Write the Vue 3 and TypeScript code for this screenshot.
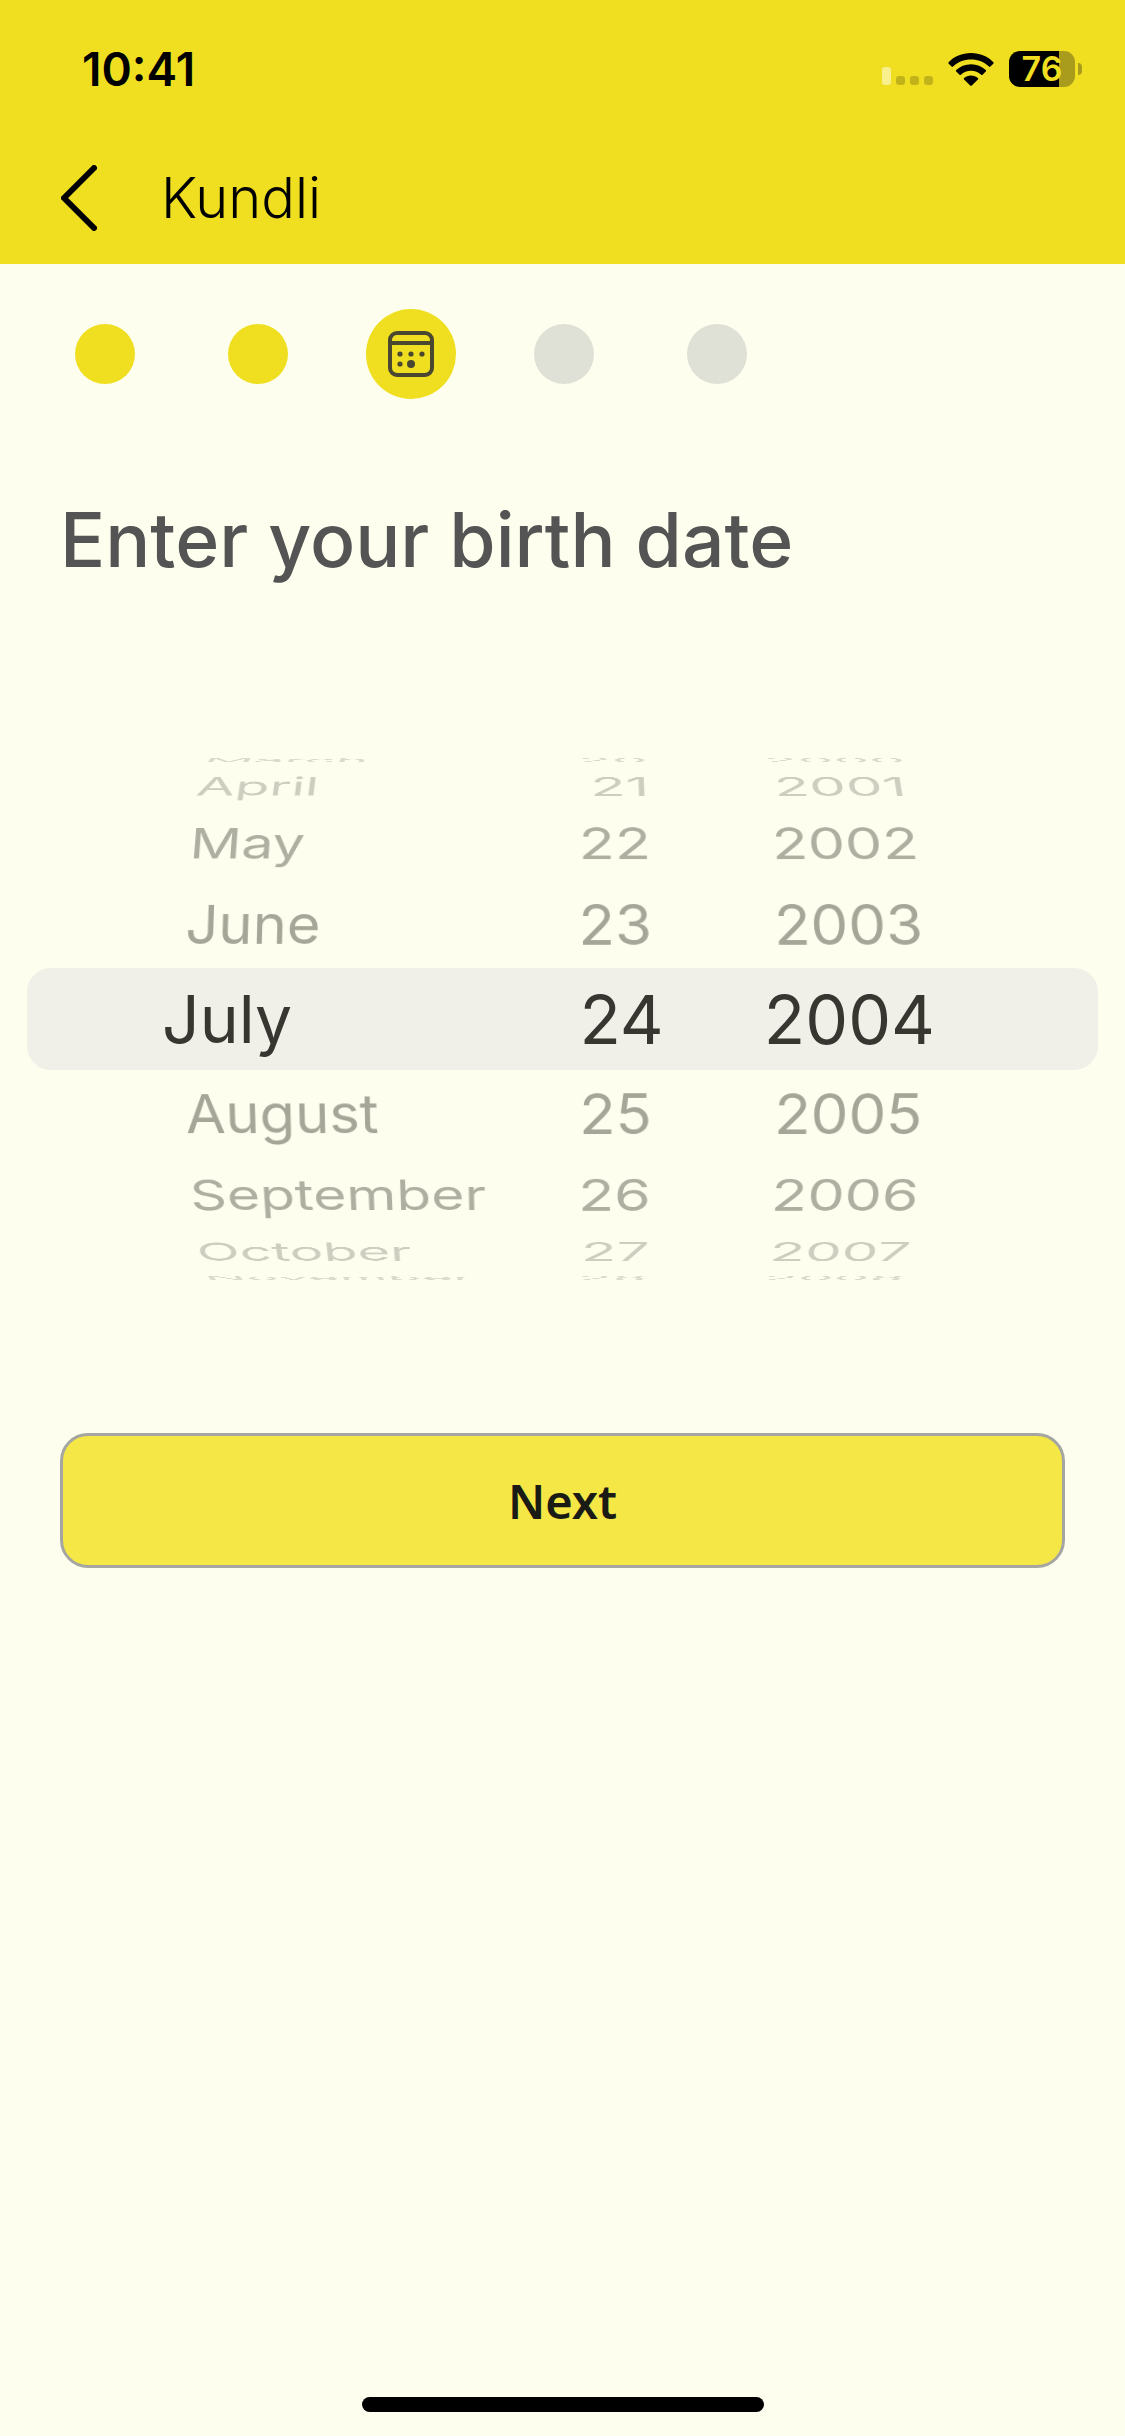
<script setup lang="ts">
import { reactive } from 'vue'

type WheelKey = 'month' | 'day' | 'year'

interface Wheel {
  key: WheelKey
  label: string
  values: string[]
  index: number
}

const months = [
  'January', 'February', 'March', 'April', 'May', 'June',
  'July', 'August', 'September', 'October', 'November', 'December',
]
const days = Array.from({ length: 31 }, (_, i) => String(i + 1))
const years = Array.from({ length: 100 }, (_, i) => String(1930 + i))

const wheels = reactive<Wheel[]>([
  { key: 'month', label: 'Month', values: months, index: 6 },
  { key: 'day', label: 'Day', values: days, index: 23 },
  { key: 'year', label: 'Year', values: years, index: 74 },
])

const steps = ['done', 'done', 'current', 'todo', 'todo'] as const

const REACH = 4

function slots(wheel: Wheel) {
  const result: { value: string; index: number; offset: number }[] = []
  for (let offset = -REACH; offset <= REACH; offset++) {
    const count = wheel.values.length
    const index = (wheel.index + offset + count) % count
    result.push({ value: wheel.values[index], index, offset })
  }
  return result
}
</script>

<template>
  <div class="screen">
    <header class="top">
      <div class="status">
        <span class="time">10:41</span>
        <div class="indicators">
          <svg class="signal" viewBox="0 0 51 18" aria-hidden="true">
            <rect x="0" y="0" width="9" height="18" rx="3" fill="#f8f08c" />
            <g fill="#c3b31a">
              <rect x="14" y="9" width="9" height="9" rx="3" />
              <rect x="28" y="9" width="9" height="9" rx="3" />
              <rect x="42" y="9" width="9" height="9" rx="3" />
            </g>
          </svg>
          <svg class="wifi" viewBox="0 0 46 33" aria-hidden="true">
            <path d="M23 0C14 0 6 3.500 0.600 9.200Q0 10 0.700 10.800L3.600 13.600Q4.300 14.200 5 13.500C9.800 9 16 6.500 23 6.500S36.200 9 41 13.500Q41.700 14.200 42.400 13.600L45.300 10.800Q46 10 45.400 9.200C40 3.500 32 0 23 0Z" />
            <path d="M23 11.200C17.200 11.200 12 13.400 8.200 17Q7.500 17.800 8.200 18.500L11.500 21.700Q12.200 22.300 12.900 21.700C15.600 19.200 19.100 17.700 23 17.700S30.400 19.200 33.100 21.700Q33.800 22.300 34.500 21.700L37.800 18.500Q38.500 17.800 37.800 17C34 13.400 28.800 11.200 23 11.200Z" />
            <path d="M23 22.500C20.300 22.500 17.900 23.500 16.100 25.100Q15.400 25.800 16.100 26.500L22.200 32.500Q23 33.200 23.800 32.500L29.900 26.500Q30.600 25.800 29.900 25.100C28.100 23.500 25.700 22.500 23 22.500Z" />
          </svg>
          <div class="battery">
            <span class="cell">76</span>
            <span class="nub"></span>
          </div>
        </div>
      </div>
      <nav class="bar">
        <button class="back" type="button" aria-label="Back">
          <svg viewBox="0 0 36 66" aria-hidden="true">
            <path d="M33 3L3 33L33 63" fill="none" stroke="#000" stroke-width="6" stroke-linecap="round" stroke-linejoin="round" />
          </svg>
        </button>
        <h1 class="title">Kundli</h1>
      </nav>
    </header>

    <main class="body">
      <ol class="steps" aria-label="Progress">
        <li v-for="(state, i) in steps" :key="i" class="step">
          <span class="dot" :class="state">
            <svg v-if="state === 'current'" viewBox="0 0 46 46" aria-hidden="true">
              <rect x="2" y="2" width="42" height="42" rx="7" fill="none" stroke="#4a4730" stroke-width="4" />
              <path d="M2 12H44" stroke="#4a4730" stroke-width="4" />
              <g fill="#4a4730">
                <circle cx="12" cy="23" r="2.600" />
                <circle cx="23" cy="23" r="2.600" />
                <circle cx="34" cy="23" r="2.600" />
                <circle cx="12" cy="33" r="2.600" />
                <circle cx="23" cy="33" r="4" />
              </g>
            </svg>
          </span>
        </li>
      </ol>

      <h2 class="question">Enter your birth date</h2>

      <section class="picker" aria-label="Birth date">
        <div class="band"></div>
        <div
          v-for="wheel in wheels"
          :key="wheel.key"
          class="wheel"
          :class="wheel.key"
          role="group"
          :aria-label="wheel.label"
        >
          <button
            v-for="slot in slots(wheel)"
            :key="slot.offset"
            type="button"
            class="option"
            :class="[`far-${Math.abs(slot.offset)}`, { selected: slot.offset === 0 }]"
            :aria-pressed="slot.offset === 0"
            :style="{ '--turn': slot.offset * -20 + 'deg' }"
            @click="wheel.index = slot.index"
          >
            {{ slot.value }}
          </button>
        </div>
      </section>

      <button class="next" type="button">Next</button>
    </main>

    <footer class="home"><span class="home-bar"></span></footer>
  </div>
</template>

<style>
body {
  background: #fdfeee;
}
</style>

<style scoped>
.screen {
  min-height: 100vh;
  display: flex;
  flex-direction: column;
  background: #fdfeee;
  font-family: Inter, "Liberation Sans", sans-serif;
}

button {
  margin: 0;
  padding: 0;
  border: 0;
  background: none;
  font: inherit;
  color: inherit;
  cursor: pointer;
}

.top {
  background: #efdf20;
  color: #000;
}

.status {
  display: flex;
  align-items: center;
  justify-content: space-between;
  height: 138px;
  padding: 0 43px 0 82px;
}

.time {
  font-size: 46px;
  font-weight: 600;
  line-height: 54px;
}

.indicators {
  display: flex;
  align-items: center;
}

.signal {
  width: 51px;
  height: 18px;
  margin: 14px 15px 0 0;
}

.wifi {
  width: 46px;
  height: 33px;
  margin-right: 15px;
}

.battery {
  display: flex;
  align-items: center;
  gap: 3px;
}

.cell {
  width: 66px;
  height: 36px;
  border-radius: 11px;
  background: linear-gradient(to right, #000 76%, #a99c1c 76%);
  color: #efdf20;
  font-size: 34px;
  font-weight: 600;
  line-height: 36px;
  text-align: center;
}

.nub {
  width: 4px;
  height: 12px;
  border-radius: 0 4px 4px 0;
  background: #a99c1c;
}

.bar {
  display: flex;
  align-items: center;
  gap: 64px;
  height: 120px;
  padding: 0 61px 6px;
}

.back,
.back svg {
  display: block;
  width: 36px;
  height: 66px;
}

.title {
  margin: 0;
  font-size: 56px;
  font-weight: 300;
  line-height: 64px;
}

.body {
  flex: 1;
  padding-top: 45px;
}

.steps {
  display: flex;
  gap: 63px;
  margin: 0;
  padding: 0 60px;
  list-style: none;
}

.step {
  display: flex;
  align-items: center;
  justify-content: center;
  width: 90px;
  height: 90px;
}

.dot {
  display: flex;
  align-items: center;
  justify-content: center;
  width: 60px;
  height: 60px;
  border-radius: 50%;
  background: #efdf20;
}

.dot.current {
  width: 90px;
  height: 90px;
}

.dot.todo {
  background: #e0e1d6;
}

.dot svg {
  width: 46px;
  height: 46px;
}

.question {
  margin: 96px 60px 0;
  font-size: 75px;
  font-weight: 500;
  line-height: 90px;
  color: #545454;
}

.picker {
  position: relative;
  display: grid;
  grid-template-columns: 46% 13% 33%;
  height: 560px;
  margin-top: 154px;
  perspective: 4000px;
}

.band {
  position: absolute;
  top: 50%;
  left: 27px;
  right: 27px;
  height: 102px;
  margin-top: -51px;
  border-radius: 24px;
  background: #f0f0e8;
}

.wheel {
  display: grid;
  align-items: center;
  transform-style: preserve-3d;
}

/* Every value sits on the surface of a drum turning about the picker's axis. */
.option {
  grid-area: 1 / 1;
  height: 90px;
  font-size: 60px;
  line-height: 90px;
  white-space: nowrap;
  color: #a5a698;
  transform: translateZ(-278px) rotateX(var(--turn)) translateZ(278px);
}

.option.selected {
  font-size: 68px;
  color: #373630;
}

.month .option {
  padding-left: 184px;
  font-size: 58px;
  text-align: left;
}

.month .option.selected {
  padding-left: 162px;
  font-size: 66px;
}

.day .option {
  padding-right: 12px;
  text-align: right;
}

.day .option.selected {
  padding-right: 0;
}

.far-2 {
  opacity: 0.9;
}

.far-3 {
  opacity: 0.55;
}

.far-4 {
  opacity: 0.4;
}

.next {
  display: block;
  width: calc(100% - 120px);
  height: 135px;
  margin: 134px 60px 0;
  border: 3px solid #a5a6a2;
  border-radius: 28px;
  background: #f4e746;
  color: #1a1b14;
  font-family: "Noto Sans", "Open Sans", sans-serif;
  font-size: 47px;
  font-weight: 600;
}

.home {
  display: flex;
  justify-content: center;
  padding-bottom: 24px;
}

.home-bar {
  width: 402px;
  height: 15px;
  border-radius: 8px;
  background: #000;
}
</style>
